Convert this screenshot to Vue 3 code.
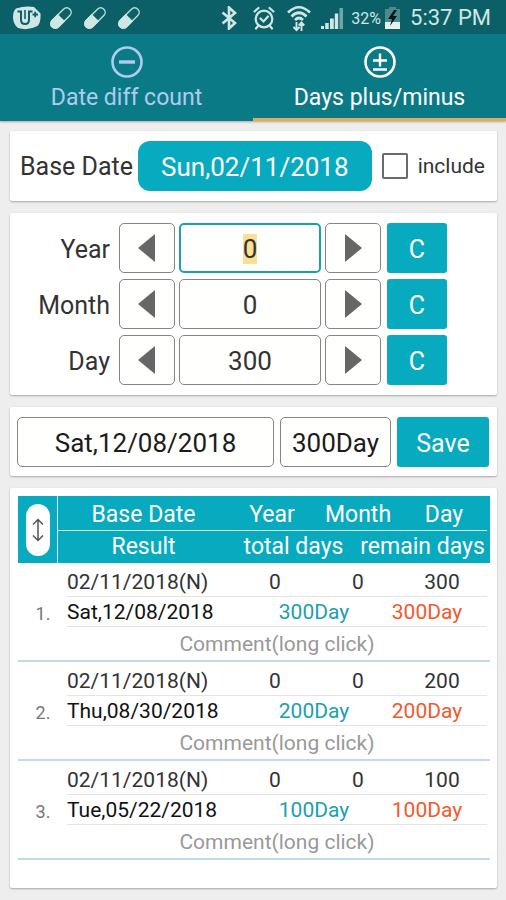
<script setup>
import { onMounted, reactive, ref } from 'vue'

const tabs = [
  { id: 'diff', label: 'Date diff count' },
  { id: 'plus', label: 'Days plus/minus' },
]
const activeTab = ref('plus')

const include = ref(false)
const fields = reactive([
  { id: 'year', label: 'Year', value: 0 },
  { id: 'month', label: 'Month', value: 0 },
  { id: 'day', label: 'Day', value: 300 },
])
const inputs = ref([])

const rows = [
  { base: '02/11/2018(N)', year: 0, month: 0, day: 300, result: 'Sat,12/08/2018', total: '300Day', remain: '300Day' },
  { base: '02/11/2018(N)', year: 0, month: 0, day: 200, result: 'Thu,08/30/2018', total: '200Day', remain: '200Day' },
  { base: '02/11/2018(N)', year: 0, month: 0, day: 100, result: 'Tue,05/22/2018', total: '100Day', remain: '100Day' },
]

onMounted(() => {
  inputs.value[0].focus()
  inputs.value[0].select()
})
</script>

<template>
  <div class="app">
    <div class="status">
      <div class="status-left">
        <svg class="logo" viewBox="0 0 28 24" aria-hidden="true">
          <path d="M3 2.500 Q12 -0.500 21 1 L27.500 7.500 Q28 17 24.500 20 Q15 25 5 22 Q0 18 0 11 Q0 5 3 2.500Z" fill="#cfe6e4" />
          <path d="M4.500 5.500H8V14q0 4 4 4t4-4V5.500h3.500" fill="none" stroke="#0b6068" stroke-width="2" />
          <path d="M12 4v9" fill="none" stroke="#0b6068" stroke-width="1.600" />
          <path d="M19.500 8.500h5.500M22.200 5.700v5.600" fill="none" stroke="#0b6068" stroke-width="1.800" />
        </svg>
        <svg v-for="n in 3" :key="n" class="pill" viewBox="0 0 22 22" aria-hidden="true">
          <g transform="rotate(45 11 11)">
            <rect x="6.500" y="-1.500" width="9" height="25" rx="4.500" fill="none" stroke="#bcd9d8" stroke-width="1.500" />
            <path d="M5.800 10.500h10.400V19a5.200 5.200 0 0 1-10.400 0z" fill="#cfe6e4" />
          </g>
        </svg>
      </div>
      <div class="status-right">
        <svg class="bt" viewBox="0 0 16 24" aria-hidden="true">
          <path d="M1.500 6.500 14 17l-6 5.500v-21L14 7 1.500 17.500" fill="none" stroke="#cfe6e4" stroke-width="2.600" />
        </svg>
        <svg class="alarm" viewBox="0 0 22 24" aria-hidden="true">
          <g fill="none" stroke="#cfe6e4" stroke-width="2.200" stroke-linecap="round">
            <circle cx="11" cy="13" r="8.300" />
            <path d="M1.500 5.500 5.500 2M20.500 5.500 16.500 2M5 20l-2 2.500M17 20l2 2.500M7.500 12.500l3 3 4.500-5" />
          </g>
        </svg>
        <svg class="wifi" viewBox="0 0 24 27" aria-hidden="true">
          <g fill="none" stroke="#cfe6e4" stroke-width="2.600">
            <path d="M1 7.500Q12-3 23 7.500M4.500 11.500q7.500-7.500 15 0M8 15q4-4 8 0" />
            <path d="M9.500 17v8M6.500 22l3 3.200 3-3.200M14.500 26v-8M11.800 20.500l2.700-3 2.700 3" stroke-width="1.900" />
          </g>
        </svg>
        <svg class="signal" viewBox="0 0 22 22" aria-hidden="true">
          <path d="M0 19h3v3H0zM4.200 16h3.500v6H4.200zM9 11.500h3.800v10.500H9zM13.800 6.500h3.400v15.500h-3.400z" fill="#cfe6e4" />
          <path d="M18.500 1H22v21h-3.500z" fill="#6fa5a8" />
        </svg>
        <span class="percent">32%</span>
        <svg class="battery" viewBox="0 0 15 22" aria-hidden="true">
          <path d="M4 0h7v2h4v20H0V2h4z" fill="#4d8a8f" />
          <path d="M0 15h15v7H0z" fill="#e4f2f0" />
          <path d="M9 3 3 12h4l-2 7 7-10H8l4-6z" fill="#031a1d" />
        </svg>
        <span class="clock">5:37 PM</span>
      </div>
    </div>

    <nav class="tabs">
      <button
        v-for="tab in tabs"
        :key="tab.id"
        type="button"
        class="tab"
        :class="{ active: tab.id === activeTab }"
        @click="activeTab = tab.id"
      >
        <svg class="tab-icon" viewBox="0 0 32 32" fill="none" stroke="currentColor" aria-hidden="true">
          <circle cx="16" cy="16" r="14.500" stroke-width="2.600" />
          <path v-if="tab.id === 'diff'" d="M8 16h16" stroke-width="3.400" />
          <path v-else d="M9 14.500h14M16 7.500v13M9 23.500h14" stroke-width="2.400" />
        </svg>
        <span>{{ tab.label }}</span>
      </button>
    </nav>

    <main class="content">
      <section class="card base">
        <span class="base-label">Base Date</span>
        <button type="button" class="date-button">Sun,02/11/2018</button>
        <label class="include">
          <input v-model="include" type="checkbox" />
          <span>include</span>
        </label>
      </section>

      <section class="card adjust">
        <div v-for="field in fields" :key="field.id" class="adjust-row">
          <label :for="field.id">{{ field.label }}</label>
          <button type="button" class="box step" :aria-label="'Decrease ' + field.label" @click="field.value--">
            <svg viewBox="0 0 18 28" aria-hidden="true"><path d="M17 0v28L0 14z" /></svg>
          </button>
          <input :id="field.id" ref="inputs" v-model="field.value" class="box value" type="text" inputmode="numeric" />
          <button type="button" class="box step" :aria-label="'Increase ' + field.label" @click="field.value++">
            <svg viewBox="0 0 18 28" aria-hidden="true"><path d="M1 0v28l17-14z" /></svg>
          </button>
          <button type="button" class="solid clear" @click="field.value = 0">C</button>
        </div>
      </section>

      <section class="card result">
        <output class="box result-date">Sat,12/08/2018</output>
        <output class="box result-days">300Day</output>
        <button type="button" class="solid save">Save</button>
      </section>

      <section class="card history">
        <table>
          <colgroup>
            <col class="c-index" /><col class="c-gutter" /><col class="c-date" /><col class="c-a" /><col class="c-b" />
            <col class="c-c" /><col class="c-d" /><col class="c-e" /><col class="c-f" /><col class="c-end" />
          </colgroup>
          <thead>
            <tr>
              <th rowspan="2" class="sort-cell">
                <button type="button" class="sort" aria-label="Sort">
                  <svg viewBox="0 0 12 24" aria-hidden="true">
                    <path d="M6 2v20M1 6.500 6 1.500l5 5M1 17.500l5 5 5-5" fill="none" stroke="#555" stroke-width="1.500" />
                  </svg>
                </button>
              </th>
              <th colspan="2" class="ruled">Base Date</th>
              <th colspan="2" class="ruled">Year</th>
              <th colspan="3" class="ruled">Month</th>
              <th class="ruled">Day</th>
              <th></th>
            </tr>
            <tr>
              <th colspan="2">Result</th>
              <th colspan="3">total days</th>
              <th colspan="3">remain days</th>
              <th></th>
            </tr>
          </thead>
          <tbody v-for="(row, i) in rows" :key="row.result">
            <tr class="first">
              <td rowspan="3" class="index">{{ i + 1 }}.</td>
              <td rowspan="3" class="edge"></td>
              <td class="left ruled">{{ row.base }}</td>
              <td colspan="2" class="ruled year">{{ row.year }}</td>
              <td colspan="3" class="ruled">{{ row.month }}</td>
              <td class="ruled day">{{ row.day }}</td>
              <td rowspan="3" class="edge"></td>
            </tr>
            <tr class="second">
              <td colspan="2" class="left ruled strong">{{ row.result }}</td>
              <td colspan="3" class="ruled total">{{ row.total }}</td>
              <td colspan="2" class="ruled remain">{{ row.remain }}</td>
            </tr>
            <tr class="third">
              <td colspan="7" class="comment">Comment(long click)</td>
            </tr>
          </tbody>
        </table>
      </section>
    </main>
  </div>
</template>

<style>
body {
  background: #eeeeee;
}
</style>

<style scoped>
.app {
  display: flex;
  flex-direction: column;
  min-height: 100vh;
  background: #eeeeee;
  color: #333333;
  font-family: Roboto, "Liberation Sans", sans-serif;
  font-size: 25px;
}
.app *,
.app {
  box-sizing: border-box;
}
button,
input {
  margin: 0;
  padding: 0;
  border: 0;
  background: none;
  font: inherit;
  color: inherit;
}
svg {
  display: block;
}

.status {
  display: flex;
  justify-content: space-between;
  align-items: center;
  height: 34px;
  padding: 2px 15px 0 13px;
  background: #0b6068;
  color: #cfe6e4;
}
.status-left,
.status-right {
  display: flex;
  align-items: center;
}
.status-left {
  gap: 12px;
}
.logo {
  width: 28px;
  height: 24px;
  margin-right: -3px;
}
.pill {
  width: 22px;
  height: 22px;
}
.bt {
  width: 16px;
  height: 24px;
  margin-right: 16px;
}
.alarm {
  width: 22px;
  height: 24px;
  margin-right: 12px;
}
.wifi {
  width: 24px;
  height: 27px;
  margin-right: 10px;
}
.signal {
  width: 22px;
  height: 22px;
  margin-right: 8px;
}
.percent {
  font-size: 16px;
  margin-right: 4px;
}
.battery {
  width: 15px;
  height: 22px;
  margin-right: 10px;
}
.clock {
  font-size: 22px;
  line-height: 28px;
}

.tabs {
  display: grid;
  grid-template-columns: 1fr 1fr;
  height: 87px;
  background: #0b7a87;
  box-shadow: 0 1px 2px rgba(0, 0, 0, 0.3);
}
.tab {
  display: flex;
  flex-direction: column;
  align-items: center;
  gap: 6px;
  padding-top: 12px;
  border-bottom: 3px solid transparent;
  color: #b0caf0;
  font-size: 23px;
  line-height: 28px;
}
.tab.active {
  color: #ffffff;
  border-bottom-color: #e5ad50;
}
.tab-icon {
  width: 32px;
  height: 32px;
}

.content {
  display: flex;
  flex: 1;
  flex-direction: column;
  gap: 12px;
  padding: 10px 9px 12px 10px;
}
.card {
  background: #ffffff;
  border-radius: 2px;
  box-shadow: 0 1px 2px rgba(0, 0, 0, 0.3);
}

.base {
  display: flex;
  align-items: center;
  padding: 10px 12px 10px 10px;
}
.base-label {
  flex: none;
  margin-right: 5px;
}
.date-button {
  flex: 1;
  height: 50px;
  padding-top: 2px;
  border-radius: 12px;
  background: #08aabf;
  color: #ffffff;
  font-size: 26px;
}
.include {
  display: flex;
  align-items: center;
  gap: 10px;
  margin-left: 10px;
  font-size: 21px;
}
.include input {
  appearance: none;
  width: 26px;
  height: 26px;
  border: 2px solid #6a6a6a;
  border-radius: 2px;
}
.include input:checked {
  background: #08aabf;
}

.adjust {
  display: flex;
  flex-direction: column;
  gap: 6px;
  padding: 10px 50px 10px 8px;
}
.adjust-row {
  display: grid;
  grid-template-columns: 97px 56px 1fr 56px 62px;
  align-items: center;
  column-gap: 4px;
}
.adjust-row label {
  padding-top: 2px;
  padding-right: 5px;
  text-align: right;
}
.box {
  height: 50px;
  border: 1px solid #858585;
  border-radius: 5px;
  background: #fffffd;
  font-size: 26px;
}
.step {
  display: flex;
  align-items: center;
  justify-content: center;
}
.step svg {
  width: 18px;
  height: 28px;
  fill: #666666;
}
.value {
  width: 100%;
  min-width: 0;
  padding-top: 2px;
  text-align: center;
}
.value:focus {
  outline: none;
  border: 2px solid #1ba0b0;
}
.value::selection {
  background: #fbdf92;
  color: #333333;
}
.solid {
  height: 50px;
  padding-top: 2px;
  border-radius: 3px;
  background: #08aabf;
  color: #ffffff;
}
.clear {
  margin-left: 2px;
}

.result {
  display: flex;
  gap: 6px;
  padding: 10px 8px 9px 7px;
  color: #1c1c1c;
}
.result-date,
.result-days {
  display: flex;
  align-items: center;
  justify-content: center;
  padding-top: 2px;
}
.result-date {
  flex: 1;
}
.result-days {
  width: 111px;
}
.save {
  width: 92px;
}

.history {
  flex: 1;
  padding: 8px 8px 24px;
}
table {
  width: 100%;
  table-layout: fixed;
  border-collapse: separate;
  border-spacing: 0;
  font-size: 21px;
}
.c-index { width: 40px; }
.c-gutter { width: 9px; }
.c-date { width: 162px; }
.c-a { width: 28px; }
.c-b { width: 58px; }
.c-c { width: 43px; }
.c-d { width: 13px; }
.c-e { width: 30px; }
.c-f { width: 86px; }
.c-end { width: 3px; }
th,
td {
  padding: 0;
  text-align: center;
  font-weight: 400;
  line-height: 28px;
  white-space: nowrap;
}
th {
  height: 32px;
  background: #08aabf;
  color: #ffffff;
  font-size: 23px;
}
th.ruled {
  height: 35px;
  padding-top: 3px;
  border-bottom: 1px solid #d8f3f6;
}
.sort-cell {
  border-right: 1px solid #d8f3f6;
}
.sort {
  display: inline-flex;
  align-items: center;
  justify-content: center;
  width: 24px;
  height: 52px;
  border-radius: 12px;
  background: #ffffff;
  vertical-align: middle;
}
.sort svg {
  width: 12px;
  height: 24px;
}
.first td {
  height: 34px;
  padding-top: 4px;
}
.second td {
  height: 30px;
}
.third td {
  height: 35px;
}
.app td.left {
  text-align: left;
}
td.ruled {
  border-bottom: 1px solid #e4e4e4;
}
td.index,
td.edge,
td.comment {
  border-bottom: 2px solid #bfdce4;
}
td.index {
  padding-left: 10px;
  font-size: 18px;
  color: #777777;
}
td.year {
  padding-left: 6px;
}
td.day,
td.remain {
  padding-right: 4px;
}
.strong {
  color: #111111;
}
.total {
  color: #1ba0b0;
}
.remain {
  color: #f4592b;
}
.comment {
  color: #999999;
}
</style>
